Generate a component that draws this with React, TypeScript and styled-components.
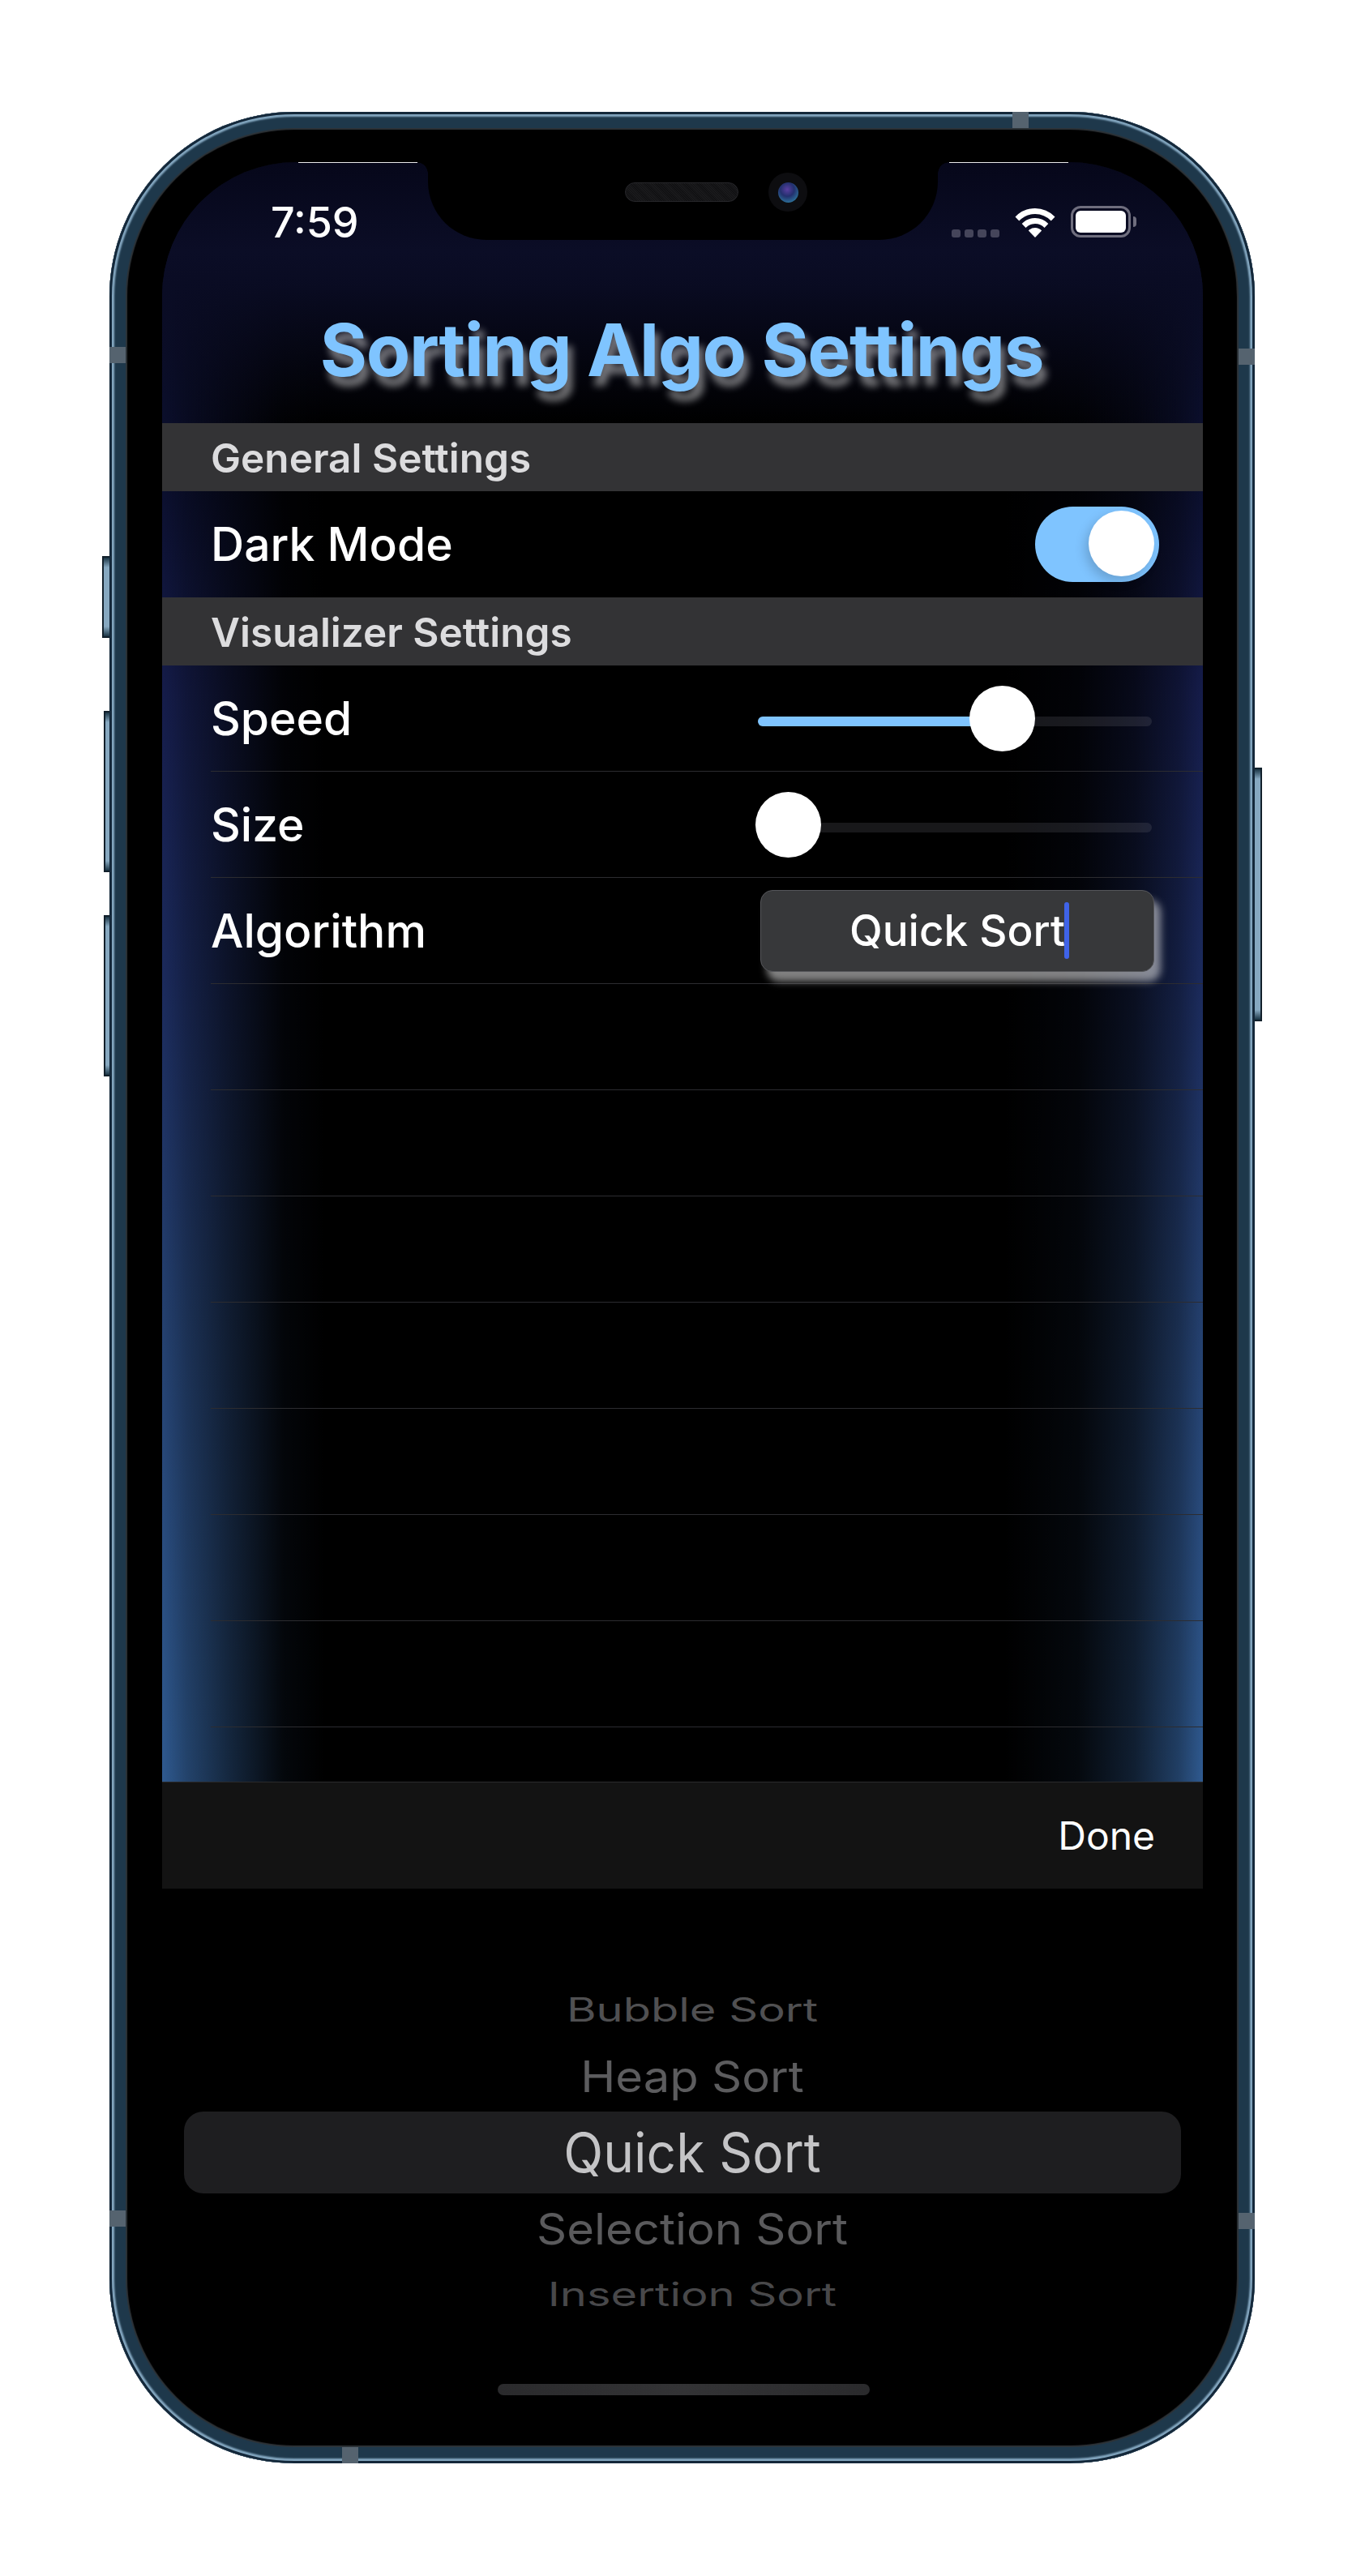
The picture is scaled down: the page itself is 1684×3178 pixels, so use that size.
import React from 'react';
import styled, { createGlobalStyle } from 'styled-components';

const GlobalStyle = createGlobalStyle`
  html, body {
    margin: 0;
    padding: 0;
    background: #fff;
  }
  body {
    font-family: Inter, "Noto Sans", "Liberation Sans", sans-serif;
  }
`;

const Page = styled.div`
  box-sizing: border-box;
  width: 1684px;
  height: 3178px;
  padding: 138px 0 0 135px;
  background: #fff;
  overflow: hidden;
`;

const Phone = styled.div`
  position: relative;
  box-sizing: border-box;
  width: 1413px;
  height: 2901px;
  padding: 62px 64px 61px 65px;
  border-radius: 228px;
  background: #000;
  box-shadow:
    inset 0 0 0 3px #14283a,
    inset 0 0 2px 6px #84a7c0,
    inset 0 0 0 20px #1e384b,
    inset 0 0 1px 22px #2d3338;
`;

const SideButton = styled.div<{ $side: 'left' | 'right'; $top: number; $height: number; $width: number }>`
  position: absolute;
  top: ${({ $top }) => $top}px;
  ${({ $side, $width }) => ($side === 'left' ? `left: -${$width}px;` : `right: -${$width}px;`)}
  box-sizing: border-box;
  width: ${({ $width }) => $width}px;
  height: ${({ $height }) => $height}px;
  border: 2px solid #12202b;
  border-${({ $side }) => ($side === 'left' ? 'right' : 'left')}: none;
  background: linear-gradient(
    180deg,
    #1a3444 0,
    #86a8c0 12px,
    #86a8c0 calc(100% - 12px),
    #1a3444 100%
  );
`;

const Antenna = styled.div<{ $x?: number; $y?: number; $right?: boolean }>`
  position: absolute;
  background: #55636f;
  ${({ $x }) => ($x !== undefined ? `left: ${$x}px; width: 20px; height: 20px;` : '')}
  ${({ $y, $right }) =>
    $y !== undefined ? `top: ${$y}px; width: 20px; height: 20px; ${$right ? 'right: 0;' : 'left: 0;'}` : ''}
`;

const AntennaTop = styled(Antenna)`
  top: 0;
`;

const AntennaBottom = styled(Antenna)`
  bottom: 0;
`;

const Screen = styled.div`
  position: relative;
  display: flex;
  flex-direction: column;
  height: 100%;
  border-radius: 165px;
  overflow: hidden;
  background: #000;
  color: #fff;
`;

const Notch = styled.div`
  position: absolute;
  top: 0;
  left: 328px;
  width: 629px;
  height: 96px;
  border-radius: 0 0 72px 72px;
  background: #000;

  &::before,
  &::after {
    content: '';
    position: absolute;
    top: 0;
    width: 14px;
    height: 14px;
  }
  &::before {
    left: -14px;
    background: radial-gradient(circle at 0 100%, transparent 13.5px, #000 14px);
  }
  &::after {
    right: -14px;
    background: radial-gradient(circle at 100% 100%, transparent 13.5px, #000 14px);
  }
`;

const EarLine = styled.div<{ $left: number }>`
  position: absolute;
  top: 0;
  left: ${({ $left }) => $left}px;
  width: 147px;
  height: 1px;
  background: #e8e8ea;
`;

const Speaker = styled.div`
  position: absolute;
  top: 25px;
  left: 243px;
  box-sizing: border-box;
  width: 140px;
  height: 24px;
  border: 1px solid #26262a;
  border-radius: 12px;
  background: repeating-linear-gradient(45deg, #1a1a1c 0 1px, #111113 1px 2px);
`;

const Camera = styled.div`
  position: absolute;
  top: 13px;
  left: 420px;
  display: flex;
  align-items: center;
  justify-content: center;
  width: 48px;
  height: 48px;
  border-radius: 50%;
  background: #0d0d10;
`;

const Lens = styled.div`
  width: 25px;
  height: 25px;
  border-radius: 50%;
  background: radial-gradient(circle at 45% 35%, #5a3fa0 0, #23306e 40%, #2c6c95 75%, #0f2740 100%);
`;

const Body = styled.div`
  flex: 1;
  min-height: 0;
  background:
    linear-gradient(
      90deg,
      rgba(0, 0, 0, 0) 0,
      rgba(0, 0, 0, 0.25) 30px,
      rgba(0, 0, 0, 0.55) 80px,
      rgba(0, 0, 0, 0.92) 150px,
      #000 200px,
      #000 1040px,
      rgba(0, 0, 0, 0.9) 1130px,
      rgba(0, 0, 0, 0.65) 1200px,
      rgba(0, 0, 0, 0.3) 1254px,
      rgba(0, 0, 0, 0) 1284px
    ),
    linear-gradient(
      180deg,
      #0a0c24 0,
      #0b0f2e 400px,
      #151c4a 650px,
      #1b2a5c 1000px,
      #24406f 1421px,
      #2f5a90 1998px
    );
`;

const Header = styled.header`
  display: flex;
  flex-direction: column;
  height: 322px;
  background: linear-gradient(
    180deg,
    #06071a 0,
    #0b0d26 110px,
    rgba(10, 12, 36, 0.95) 150px,
    rgba(10, 12, 36, 0) 100%
  );
`;

const StatusBar = styled.div`
  display: flex;
  align-items: flex-start;
  justify-content: space-between;
  padding: 46px 89px 0 134px;
`;

const Time = styled.span`
  font-size: 52px;
  font-weight: 500;
  line-height: 58px;
`;

const StatusIcons = styled.div`
  display: flex;
  align-items: flex-end;
  gap: 19px;
  margin-top: 8px;
`;

const Signal = styled.div`
  display: flex;
  gap: 5px;
`;

const SignalDot = styled.span`
  width: 11px;
  height: 10px;
  border-radius: 3px;
  background: #45455a;
`;

const Battery = styled.div`
  position: relative;
  box-sizing: border-box;
  width: 74px;
  height: 39px;
  padding: 3px;
  border: 3px solid #6f6e7e;
  border-radius: 12px;

  &::after {
    content: '';
    position: absolute;
    top: 10px;
    right: -10px;
    width: 4px;
    height: 13px;
    border-radius: 0 4px 4px 0;
    background: #6f6e7e;
  }
`;

const BatteryFill = styled.div`
  height: 100%;
  border-radius: 6px;
  background: #fff;
`;

const Title = styled.h1`
  margin: 74px 0 0 -2px;
  color: #7fc4ff;
  font-size: 89px;
  font-weight: 700;
  line-height: 108px;
  letter-spacing: -1.4px;
  text-align: center;
  text-shadow: 6px 12px 10px rgba(255, 255, 255, 0.45);
`;

const SectionHeader = styled.div`
  box-sizing: border-box;
  height: 84px;
  padding-left: 60px;
  background: #333335;
  color: #dcdcde;
  font-size: 49.5px;
  font-weight: 600;
  line-height: 86px;
`;

const Row = styled.div<{ $plain?: boolean }>`
  display: flex;
  align-items: center;
  justify-content: space-between;
  box-sizing: border-box;
  height: 131px;
  margin-left: 60px;
  border-bottom: 1px solid ${({ $plain }) => ($plain ? 'transparent' : '#2c2c30')};
`;

const Label = styled.span`
  font-size: 57px;
  font-weight: 500;
`;

const Toggle = styled.div`
  display: flex;
  justify-content: flex-end;
  box-sizing: border-box;
  width: 153px;
  height: 93px;
  margin-right: 54px;
  padding: 5px 6px;
  border-radius: 47px;
  background: #7fc4ff;
`;

const ToggleKnob = styled.div`
  width: 81px;
  height: 81px;
  border-radius: 50%;
  background: #fff;
  box-shadow: -4px 6px 14px rgba(0, 0, 0, 0.18);
`;

const Slider = styled.div`
  position: relative;
  width: 486px;
  height: 12px;
  margin-top: 8px;
  margin-right: 63px;
  border-radius: 6px;
  background: rgba(120, 120, 128, 0.2);
`;

const SliderFill = styled.div`
  height: 100%;
  border-radius: 6px;
  background: #7fc4ff;
`;

const SliderKnob = styled.div`
  position: absolute;
  top: -38px;
  width: 81px;
  height: 81px;
  border-radius: 50%;
  background: #fff;
`;

const PickerField = styled.div`
  display: flex;
  align-items: center;
  justify-content: center;
  box-sizing: border-box;
  width: 486px;
  height: 101px;
  margin-right: 60px;
  border: 1px solid #55565a;
  border-radius: 15px;
  background: #37383a;
  box-shadow: 8px 12px 10px rgba(255, 255, 255, 0.5);
  font-size: 53px;
  font-weight: 500;
`;

const FieldText = styled.span`
  position: relative;

  &::after {
    content: '';
    position: absolute;
    top: -3px;
    left: calc(100% - 1px);
    width: 6px;
    height: 70px;
    border-radius: 3px;
    background: #3f63e8;
  }
`;

const Toolbar = styled.div`
  display: flex;
  align-items: center;
  justify-content: flex-end;
  box-sizing: border-box;
  height: 132px;
  padding-right: 59px;
  border-top: 1px solid #2a2a2c;
  background: #131313;
  font-size: 48px;
`;

const Picker = styled.div`
  display: flex;
  flex-direction: column;
  box-sizing: border-box;
  height: 648px;
  padding-top: 112px;
`;

const PickerRow = styled.div<{ $height: number; $size: number; $squash: number; $color: string; $selected?: boolean }>`
  display: flex;
  align-items: center;
  justify-content: center;
  height: ${({ $height }) => $height}px;
  margin: 0 27px;
  padding-left: 24px;
  border-radius: 24px;
  background: ${({ $selected }) => ($selected ? '#1e1e20' : 'transparent')};
  color: ${({ $color }) => $color};
  font-size: ${({ $size }) => $size}px;

  span {
    display: block;
    transform: scaleY(${({ $squash }) => $squash});
  }
`;

const HomeIndicator = styled.div`
  width: 459px;
  height: 14px;
  margin: 73px 0 0 414px;
  border-radius: 7px;
  background: linear-gradient(90deg, #2a2a2c, #333335 50%, #2a2a2c);
`;

const WifiIcon = () => (
  <svg width="50" height="37" viewBox="0 0 52 37" fill="none" preserveAspectRatio="none">
    <path d="M3 14A32.5 32.5 0 0 1 49 14" stroke="#fff" strokeWidth="7" />
    <path d="M11.5 22.5A20.5 20.5 0 0 1 40.5 22.5" stroke="#fff" strokeWidth="7" />
    <path d="M26 37L17.5 28.5A12 12 0 0 1 34.5 28.5Z" fill="#fff" />
  </svg>
);

const pickerItems = [
  { text: 'Bubble Sort', height: 76, size: 56, squash: 0.72, color: '#505052' },
  { text: 'Heap Sort', height: 87, size: 58, squash: 0.92, color: '#5c5c5e' },
  { text: 'Quick Sort', height: 101, size: 64, squash: 1.05, color: '#c4c4c6', selected: true },
  { text: 'Selection Sort', height: 88, size: 58, squash: 0.92, color: '#5a5a5c' },
  { text: 'Insertion Sort', height: 74, size: 56, squash: 0.72, color: '#48484a' },
];

const App = () => (
  <Page>
    <GlobalStyle />
    <Phone>
      <SideButton $side="left" $top={548} $height={101} $width={9} />
      <SideButton $side="left" $top={739} $height={199} $width={7} />
      <SideButton $side="left" $top={991} $height={199} $width={7} />
      <SideButton $side="right" $top={809} $height={313} $width={9} />
      <Antenna $y={290} />
      <Antenna $y={292} $right />
      <Antenna $y={2589} />
      <Antenna $y={2592} $right />
      <AntennaTop $x={1114} />
      <AntennaBottom $x={287} />

      <Screen>
        <Body>
          <Header>
            <StatusBar>
              <Time>7:59</Time>
              <StatusIcons>
                <Signal>
                  <SignalDot />
                  <SignalDot />
                  <SignalDot />
                  <SignalDot />
                </Signal>
                <WifiIcon />
                <Battery>
                  <BatteryFill />
                </Battery>
              </StatusIcons>
            </StatusBar>
            <Title>Sorting Algo Settings</Title>
          </Header>

          <SectionHeader>General Settings</SectionHeader>
          <Row $plain>
            <Label>Dark Mode</Label>
            <Toggle>
              <ToggleKnob />
            </Toggle>
          </Row>

          <SectionHeader>Visualizer Settings</SectionHeader>
          <Row>
            <Label>Speed</Label>
            <Slider>
              <SliderFill style={{ width: 280 }} />
              <SliderKnob style={{ left: 261 }} />
            </Slider>
          </Row>
          <Row>
            <Label>Size</Label>
            <Slider>
              <SliderKnob style={{ left: -3 }} />
            </Slider>
          </Row>
          <Row>
            <Label>Algorithm</Label>
            <PickerField>
              <FieldText>Quick Sort</FieldText>
            </PickerField>
          </Row>
          {Array.from({ length: 7 }).map((_, i) => (
            <Row key={i} />
          ))}
        </Body>

        <Toolbar>Done</Toolbar>

        <Picker>
          {pickerItems.map((item) => (
            <PickerRow
              key={item.text}
              $height={item.height}
              $size={item.size}
              $squash={item.squash}
              $color={item.color}
              $selected={item.selected}
            >
              <span>{item.text}</span>
            </PickerRow>
          ))}
          <HomeIndicator />
        </Picker>

        <Notch>
          <Speaker />
          <Camera>
            <Lens />
          </Camera>
        </Notch>
        <EarLine $left={168} />
        <EarLine $left={971} />
      </Screen>
    </Phone>
  </Page>
);

export default App;
